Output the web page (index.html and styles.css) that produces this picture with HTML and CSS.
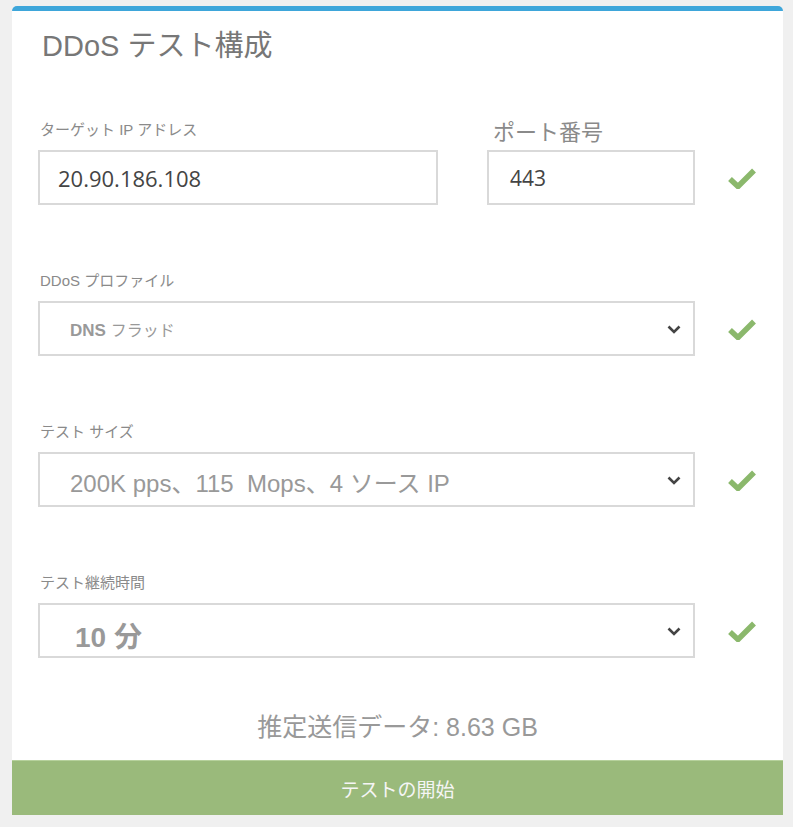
FILE: index.html
```html
<!DOCTYPE html>
<html lang="ja">
<head>
<meta charset="utf-8">
<title>DDoS テスト構成</title>
<link rel="stylesheet" href="styles.css">
</head>
<body>
<div class="card">
  <h1 class="title">DDoS テスト構成</h1>
  <div class="rows">
    <div class="row">
      <div class="group g-ip">
        <div class="label">ターゲット IP アドレス</div>
        <div class="box"><span class="value">20.90.186.108</span></div>
      </div>
      <div class="group g-port">
        <div class="label label-big">ポート番号</div>
        <div class="box"><span class="value port">443</span></div>
      </div>
      <div class="check-cell">
        <svg class="check" viewBox="0 0 28 22"><path d="M2 12 L10 19.5 L26 3.5" fill="none" stroke="#8bb86c" stroke-width="5.5"/></svg>
      </div>
    </div>
    <div class="row">
      <div class="group g-full">
        <div class="label">DDoS プロファイル</div>
        <div class="box select"><span class="opt opt-dns"><b>DNS</b> <span class="kana">フラッド</span></span>
          <svg class="chev" viewBox="0 0 14 9"><path d="M1.5 1.5 L7 7 L12.5 1.5" fill="none" stroke="#444" stroke-width="2.6"/></svg></div>
      </div>
      <div class="check-cell">
        <svg class="check" viewBox="0 0 28 22"><path d="M2 12 L10 19.5 L26 3.5" fill="none" stroke="#8bb86c" stroke-width="5.5"/></svg>
      </div>
    </div>
    <div class="row">
      <div class="group g-full">
        <div class="label">テスト サイズ</div>
        <div class="box select"><span class="opt opt-size">200K pps、115&nbsp; Mops、4 ソース IP</span>
          <svg class="chev" viewBox="0 0 14 9"><path d="M1.5 1.5 L7 7 L12.5 1.5" fill="none" stroke="#444" stroke-width="2.6"/></svg></div>
      </div>
      <div class="check-cell">
        <svg class="check" viewBox="0 0 28 22"><path d="M2 12 L10 19.5 L26 3.5" fill="none" stroke="#8bb86c" stroke-width="5.5"/></svg>
      </div>
    </div>
    <div class="row">
      <div class="group g-full">
        <div class="label">テスト継続時間</div>
        <div class="box select"><span class="opt opt-time">10 分</span>
          <svg class="chev" viewBox="0 0 14 9"><path d="M1.5 1.5 L7 7 L12.5 1.5" fill="none" stroke="#444" stroke-width="2.6"/></svg></div>
      </div>
      <div class="check-cell">
        <svg class="check" viewBox="0 0 28 22"><path d="M2 12 L10 19.5 L26 3.5" fill="none" stroke="#8bb86c" stroke-width="5.5"/></svg>
      </div>
    </div>
  </div>
  <div class="estimate">推定送信データ: 8.63 GB</div>
  <div class="start">テストの開始</div>
</div>
</body>
</html>
```
FILE: styles.css
```css
html, body {
  margin: 0;
  padding: 0;
  background: #f0f0f0;
  font-family: "Liberation Sans", "Noto Sans CJK JP", sans-serif;
}
.card {
  width: 771px;
  margin: 6px 0 0 12px;
  background: #ffffff;
  border-top: 5px solid #3ea6da;
  border-radius: 5px 5px 0 0;
  box-sizing: border-box;
}
.title {
  margin: 18px 0 0 30px;
  font-size: 29px;
  line-height: 35px;
  font-weight: normal;
  color: #777777;
}
.rows {
  margin-top: 56px;
  padding-left: 26px;
  display: flex;
  flex-direction: column;
  gap: 66px;
}
.row {
  display: flex;
  align-items: flex-end;
}
.group {
  display: flex;
  flex-direction: column;
}
.g-ip { width: 400px; }
.g-port { width: 208px; margin-left: 49px; }
.g-full { width: 657px; }
.label {
  font-size: 15px;
  line-height: 20px;
  height: 20px;
  margin-bottom: 10px;
  padding-left: 2px;
  color: #8a8a8a;
  white-space: nowrap;
}
.label-big {
  font-size: 22px;
  line-height: 26px;
  height: 26px;
  margin-bottom: 4px;
  padding-left: 6px;
}
.box {
  height: 55px;
  box-sizing: border-box;
  border: 2px solid #d9d9d9;
  display: flex;
  align-items: center;
  padding-left: 18px;
}
.value {
  font-family: "Open Sans", "Liberation Sans", sans-serif;
  font-size: 22px;
  color: #444444;
}
.port {
  font-size: 21px;
  padding-left: 3px;
}
.select {
  padding-left: 30px;
  padding-right: 12px;
  justify-content: space-between;
}
.opt {
  color: #999999;
  white-space: nowrap;
}
.opt-dns {
  font-size: 17px;
}
.opt-dns b {
  font-weight: bold;
}
.kana {
  font-size: 16px;
}
.opt-size {
  font-size: 24px;
  padding-top: 3px;
}
.opt-time {
  font-size: 28px;
  font-weight: bold;
  padding-left: 5px;
  padding-top: 8px;
}
.chev {
  width: 14px;
  height: 9px;
  margin-top: 1px;
}
.check-cell {
  height: 55px;
  display: flex;
  align-items: center;
  padding-left: 33px;
}
.check {
  width: 28px;
  height: 22px;
}
.estimate {
  margin-top: 52px;
  text-align: center;
  font-size: 25px;
  line-height: 34px;
  color: #999999;
}
.start {
  margin-top: 16px;
  height: 55px;
  background: #9aba7b;
  border-top: 1px solid #b6d19c;
  box-sizing: border-box;
  display: flex;
  align-items: center;
  justify-content: center;
  font-size: 19px;
  color: #f5f5f5;
}
```
